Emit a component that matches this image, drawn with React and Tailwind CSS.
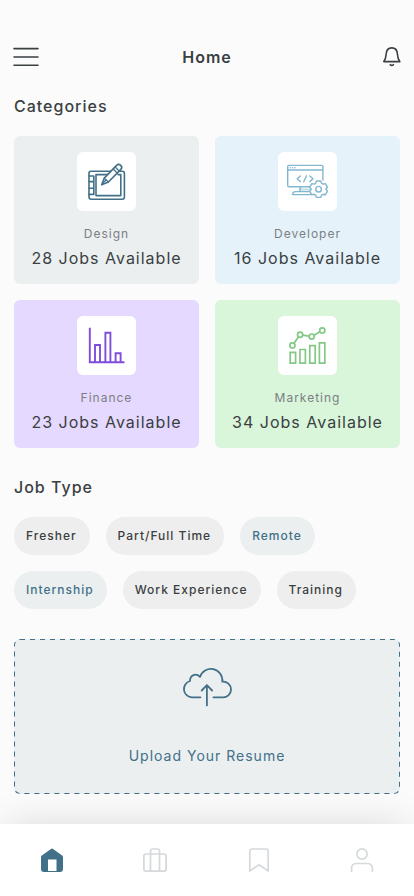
import React from 'react';
import clsx from 'clsx';

function DesignIcon() {
  return (
    <svg viewBox="0 0 59 59" className="w-full" fill="none" stroke="#437089" strokeWidth="1.6" strokeLinecap="round" strokeLinejoin="round">
      <path d="M35.5 19.2H14a2 2 0 0 0-2 2V45a2.2 2.2 0 0 0 2.2 2.2h31A2.2 2.2 0 0 0 47.4 45V21.2a2 2 0 0 0-2-2H42.5" />
      <path d="M32 22.6H19V43.6H43.8V22.6H41" />
      <path d="M12 24h4.8v18.4H12M12 29.6h4.8M12 36.2h4.8" />
      <path d="M24.7 32.7l2.6-6.6L39.6 13.4a2.9 2.9 0 0 1 4.2 4L31.4 30z" fill="#fff" />
      <path d="M27.3 26.1l4.1 3.9M36.2 17l4 4M38.2 15l4 4M24.7 32.7l4.6-5" strokeWidth="1.2" />
    </svg>
  );
}

function DeveloperIcon() {
  return (
    <svg viewBox="0 0 59 59" className="w-full" fill="none" stroke="#83b7cf" strokeWidth="1.4" strokeLinecap="round" strokeLinejoin="round">
      <path d="M32 34.7H11a1.3 1.3 0 0 1-1.3-1.3V14.7a1.3 1.3 0 0 1 1.3-1.3h32.6a1.3 1.3 0 0 1 1.3 1.3V28M9.7 18h35.2" />
      <path d="M12.2 15.8h.1M14.6 15.8h.1M17 15.8h.1" />
      <path d="M22.4 24l-3.2 2.8 3.2 2.8M31.8 24l3.2 2.8-3.2 2.8M28.6 23.8l-2.9 6" />
      <path d="M22.6 34.7l-1 4.8M14.6 42.6c0-2 1-3 3-3h14.6M14.6 42.6h18" />
      <path d="M22 37.5h9" strokeWidth="2" opacity="0.5" />
      <path
        fill="#fff"
        d="M38.5 29h4.2l.9 2.3 1.4.8 2.4-.5 2.1 3.7-1.6 1.9 1.6 1.9-2.1 3.7-2.4-.5-1.4.8-.9 2.3h-4.2l-.9-2.3-1.4-.8-2.4.5-2.1-3.7 1.6-1.9-1.6-1.9 2.1-3.7 2.4.5 1.4-.8z"
      />
      <circle cx="40.6" cy="37.2" r="2.8" />
    </svg>
  );
}

function FinanceIcon() {
  return (
    <svg viewBox="0 0 59 59" className="w-full" fill="none" stroke="#7f4ddd" strokeWidth="1.9">
      <path d="M12.8 11.7V46.2H47.5" />
      <path d="M18 46V29h5v17M28.4 46V16.8h5V46M38.6 46V37.2h5V46" />
    </svg>
  );
}

function MarketingIcon() {
  return (
    <svg viewBox="0 0 59 59" className="w-full" fill="none" stroke="#83c985" strokeWidth="1.7">
      <path d="M12.2 36.4h5.4v10.8h-5.4zM22 33.5h5.4v13.7H22zM31.8 29.7h5.4v17.5h-5.4zM41.4 26.8h5.4v20.4h-5.4z" />
      <path d="M16 27.2l4.4-6.3M24.8 19.2l6.2.9M36.1 19.3l5.8-3.6" />
      <circle cx="14.4" cy="29.4" r="2.6" />
      <circle cx="22.1" cy="18.8" r="2.6" />
      <circle cx="33.7" cy="20.6" r="2.6" />
      <circle cx="44.3" cy="14.4" r="2.6" />
    </svg>
  );
}

const categories = [
  { title: 'Design', jobs: 28, icon: <DesignIcon />, bg: 'bg-[#ebeff0]' },
  { title: 'Developer', jobs: 16, icon: <DeveloperIcon />, bg: 'bg-[#e5f2fa]' },
  { title: 'Finance', jobs: 23, icon: <FinanceIcon />, bg: 'bg-[#e5d9ff]' },
  { title: 'Marketing', jobs: 34, icon: <MarketingIcon />, bg: 'bg-[#d9f5da]' }
];

const jobTypes = [
  { label: 'Fresher' },
  { label: 'Part/Full Time' },
  { label: 'Remote', active: true },
  { label: 'Internship', active: true },
  { label: 'Work Experience' },
  { label: 'Training' }
];

const tabs = [
  {
    label: 'Home',
    active: true,
    icon: (
      <path
        d="M12 .5a1.5 1.5 0 0 1 1 .4l9.200 6.500a2 2 0 0 1 .8 1.600V21a3 3 0 0 1-3 3H4a3 3 0 0 1-3-3V9a2 2 0 0 1 .8-1.600L11 .9a1.500 1.500 0 0 1 1-.4zM8 11.500V23h8.500V11.500z"
        fill="currentColor"
        fillRule="evenodd"
        stroke="none"
      />
    )
  },
  {
    label: 'Jobs',
    icon: (
      <>
        <rect x="0.9" y="6" width="22.2" height="17.2" rx="2" />
        <path d="M7.500 23V3a2 2 0 0 1 2-2h5a2 2 0 0 1 2 2v20" />
      </>
    )
  },
  {
    label: 'Saved',
    icon: <path d="M2.800 23V3a2 2 0 0 1 2-2h14.400a2 2 0 0 1 2 2v20L12 16.800z" />
  },
  {
    label: 'Profile',
    icon: (
      <>
        <circle cx="12" cy="6" r="5.100" />
        <path d="M1.600 23.200v-3.200a4.500 4.500 0 0 1 4.500-4.500h11.800a4.500 4.500 0 0 1 4.500 4.500v3.200" />
      </>
    )
  }
];

export default function App() {
  return (
    <div className="flex min-h-screen flex-col bg-[#fbfbfb] font-['Inter',sans-serif] tracking-[1px] text-[#3a3f42]">
      {/* Header */}
      <header className="flex items-center justify-between px-3 pt-11">
        <button aria-label="Menu">
          <svg width="28" height="26" viewBox="0 0 28 26" stroke="currentColor" strokeWidth="1.6" strokeLinecap="round">
            <path d="M2 4.600h24M2 13h24M2 21.300h24" />
          </svg>
        </button>
        <h1 className="text-base font-semibold">Home</h1>
        <button aria-label="Notifications" className="w-7">
          <svg width="20" height="26" viewBox="0 0 20 26" className="ml-auto" fill="none" stroke="currentColor" strokeWidth="1.6" strokeLinecap="round" strokeLinejoin="round">
            <path d="M1.800 17.600c1.900-2.200 2.100-4 2.300-7.100C4.300 6.500 6.600 3.900 9.800 3.900s5.500 2.600 5.700 6.600c.2 3.100.4 4.900 2.300 7.100z" />
            <path d="M8.200 20.700c.9.900 2.300.9 3.200 0" />
          </svg>
        </button>
      </header>

      <main className="px-3.5 pb-7">
        {/* Categories */}
        <h2 className="mt-6 text-base leading-6 font-medium">Categories</h2>
        <div className="mt-[18px] grid grid-cols-2 gap-4">
          {categories.map((item) => (
            <a key={item.title} href="#" className={clsx('flex flex-col items-center rounded-md pt-4 pb-3.5', item.bg)}>
              <span className="w-[59px] rounded-md bg-white">{item.icon}</span>
              <span className="mt-[15px] text-xs leading-4 text-[#7b8083]">{item.title}</span>
              <span className="mt-1 text-base leading-6">{item.jobs} Jobs Available</span>
            </a>
          ))}
        </div>

        {/* Job Type */}
        <h2 className="mt-[27px] text-base leading-6 font-medium">Job Type</h2>
        <div className="mt-[18px] flex flex-wrap gap-4">
          {jobTypes.map((type) => (
            <button
              key={type.label}
              className={clsx(
                'h-[38px] rounded-full pr-[13px] pl-3 text-xs font-medium',
                type.active ? 'bg-[#ebeff0] text-[#437089]' : 'bg-[#eeeeee]'
              )}
            >
              {type.label}
            </button>
          ))}
        </div>

        {/* Upload */}
        <button className="relative mt-[30px] flex w-full flex-col items-center rounded-md bg-[#ebeff0] pt-7 pb-7 text-[#437089]">
          <svg className="absolute inset-0 h-full w-full overflow-hidden rounded-md" fill="none">
            <rect width="100%" height="100%" rx="6" stroke="#437089" strokeWidth="2" strokeDasharray="5 5" />
          </svg>
          <svg width="50" height="40" viewBox="-1 -1 50 40" fill="none" stroke="currentColor" strokeWidth="1.800" strokeLinecap="round" strokeLinejoin="round">
            <path d="M17.400 29.300H9A8.300 8.300 0 0 1 7 13C7 6.800 13 4.800 17 8.900A11.450 11.450 0 0 1 39.300 13.700A7.850 7.850 0 1 1 39.300 29.300H30.400" />
            <path d="M23.900 37.400V17.200M18.700 22.500l5.200-5.300 5.200 5.300" />
          </svg>
          <span className="mt-[39px] text-sm leading-5">Upload Your Resume</span>
        </button>
      </main>

      {/* Bottom navigation */}
      <nav className="relative mt-auto grid h-[72px] grid-cols-4 bg-white shadow-[0_-4px_40px_-8px_rgba(0,0,0,0.16)]">
        {tabs.map((tab) => (
          <a
            key={tab.label}
            href="#"
            aria-label={tab.label}
            className={clsx('flex items-center justify-center', tab.active ? 'text-[#437089]' : 'text-[#d5d9db]')}
          >
            <svg width="24" height="24" viewBox="0 0 24 24" fill="none" stroke="currentColor" strokeWidth="1.700" strokeLinecap="round" strokeLinejoin="round">
              {tab.icon}
            </svg>
          </a>
        ))}
      </nav>
    </div>
  );
}
